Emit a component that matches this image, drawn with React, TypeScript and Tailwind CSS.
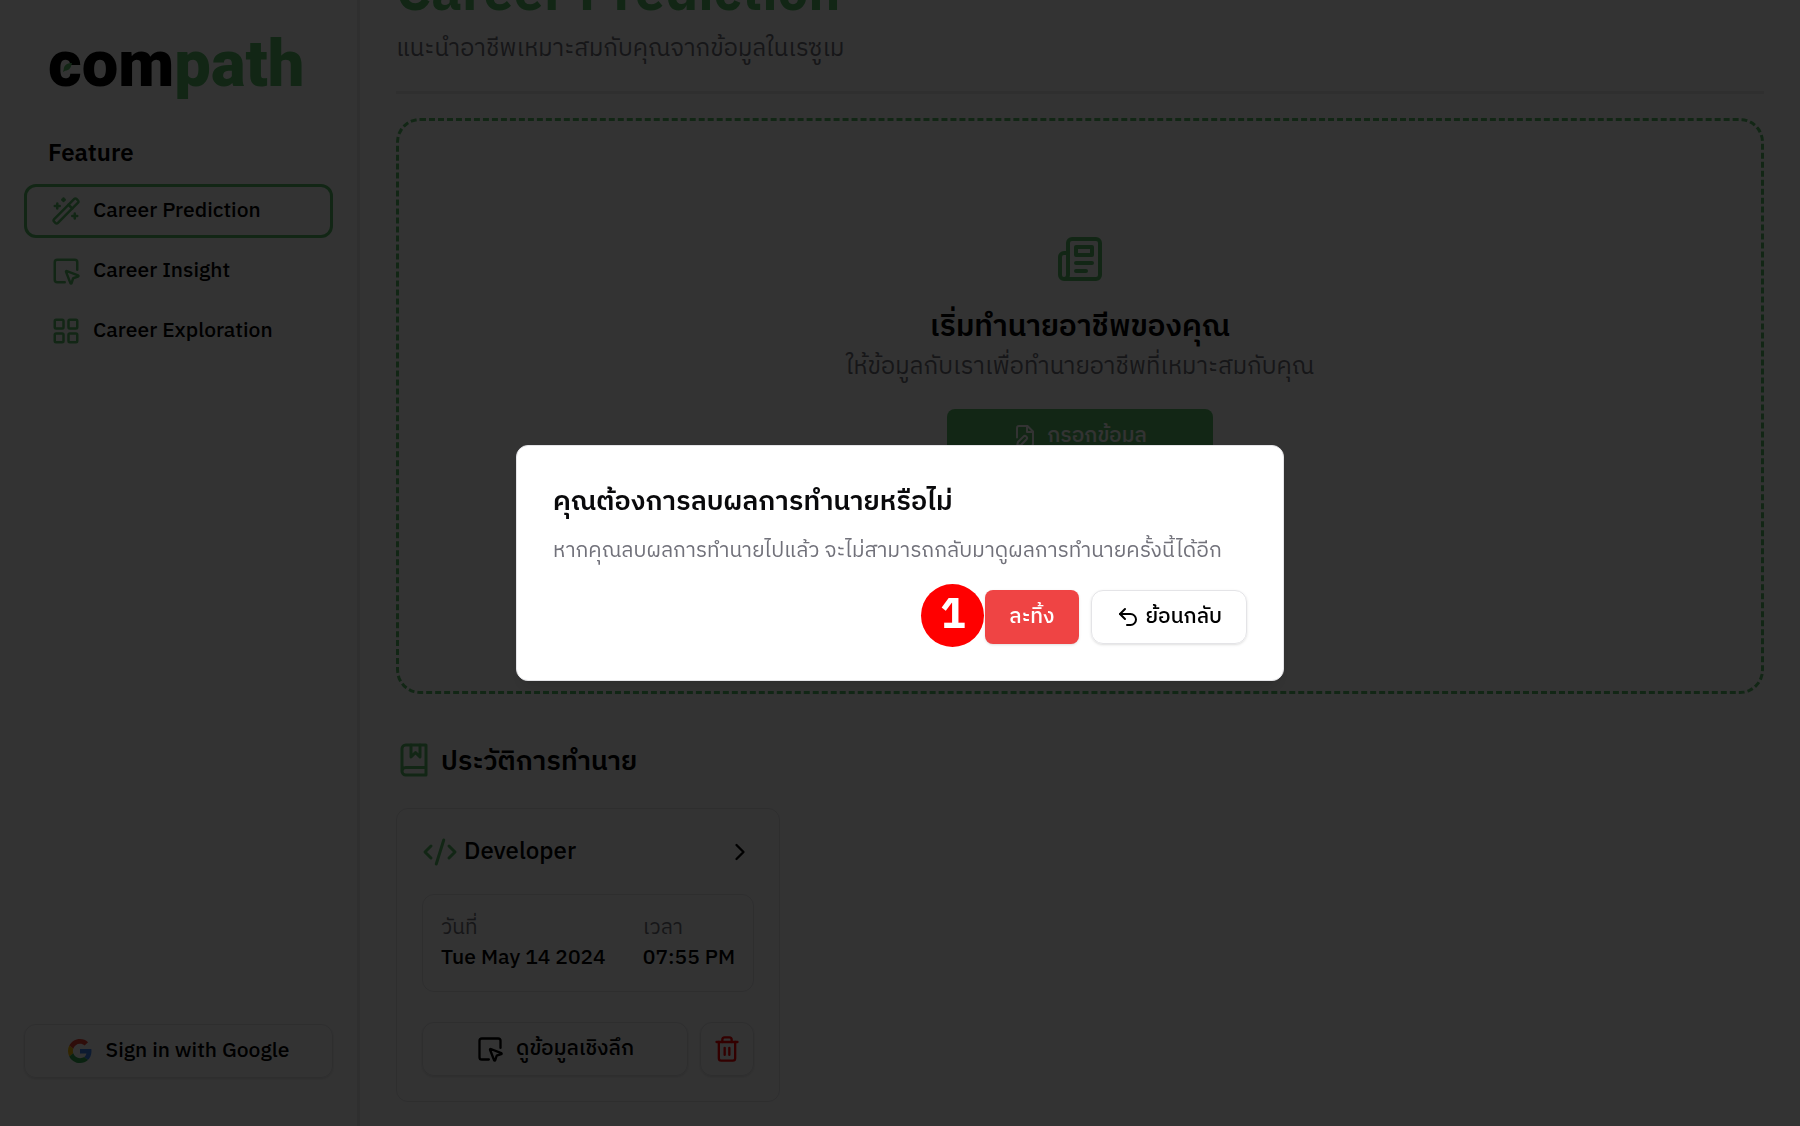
import React from "react";
import { LayoutGrid, SquareMousePointer, Trash2, Undo2, WandSparkles, ChevronRight } from "lucide-react";

function Logo() {
  return (
    <a href="#" aria-label="compath" className="relative ml-6 block w-fit whitespace-nowrap font-['Roboto'] text-[65px] leading-[80px] font-black text-black">
      com<span className="text-[#5abf6a]">path</span>
      <svg viewBox="0 0 10 10" className="absolute top-[39px] left-[15px] size-[9px]" fill="#5abf6a" aria-hidden="true">
        <path d="M10 0C4 0 1 3 .8 7L0 10l2.500-1.500C7 8.500 9 5 10 0Z" />
      </svg>
    </a>
  );
}

function GoogleIcon() {
  return (
    <svg viewBox="0 0 48 48" className="size-6" aria-hidden="true">
      <path fill="#EA4335" d="M24 9.500c3.540 0 6.710 1.220 9.210 3.600l6.850-6.850C35.900 2.380 30.470 0 24 0 14.620 0 6.510 5.380 2.560 13.220l7.980 6.190C12.430 13.720 17.740 9.500 24 9.500z" />
      <path fill="#4285F4" d="M46.980 24.550c0-1.570-.15-3.090-.38-4.550H24v9.020h12.940c-.58 2.960-2.260 5.480-4.780 7.180l7.730 6c4.510-4.180 7.090-10.360 7.090-17.650z" />
      <path fill="#FBBC05" d="M10.530 28.590c-.48-1.450-.76-2.990-.76-4.590s.27-3.140.76-4.590l-7.980-6.190C.92 16.460 0 20.120 0 24c0 3.880.92 7.540 2.560 10.780l7.970-6.190z" />
      <path fill="#34A853" d="M24 48c6.480 0 11.930-2.130 15.890-5.810l-7.730-6c-2.150 1.450-4.920 2.300-8.160 2.300-6.260 0-11.570-4.220-13.470-9.910l-7.980 6.190C6.510 42.620 14.620 48 24 48z" />
    </svg>
  );
}

function Drawing({ className, children }: { className: string; children: React.ReactNode }) {
  return (
    <svg viewBox="0 0 24 24" fill="none" stroke="currentColor" strokeWidth="2" strokeLinecap="round" strokeLinejoin="round" className={className} aria-hidden="true">
      {children}
    </svg>
  );
}

const features = [
  { label: "Career Prediction", icon: WandSparkles, active: true },
  { label: "Career Insight", icon: SquareMousePointer, active: false },
  { label: "Career Exploration", icon: LayoutGrid, active: false },
];

function Sidebar() {
  return (
    <aside className="flex w-[360px] shrink-0 flex-col border-r-3 border-[#ececec] px-6 pt-6 pb-12">
      <Logo />
      <h2 className="mt-8 ml-6 text-2xl leading-9 font-semibold">Feature</h2>
      <nav className="mt-3 flex flex-col gap-1.5">
        {features.map(({ label, icon: Icon, active }) => (
          <a
            key={label}
            href="#"
            className={
              "flex h-[54px] items-center gap-3 rounded-xl border-3 px-6 text-[21px] leading-[30px] font-medium " +
              (active ? "border-[#5abf6a]" : "border-transparent")
            }
          >
            <Icon className="size-[30px] text-[#5abf6a]" />
            {label}
          </a>
        ))}
      </nav>
      <button className="mt-auto flex h-[54px] items-center justify-center gap-3.5 rounded-xl border border-[#e4e4e7] text-[21px] leading-[30px] font-medium shadow-sm">
        <GoogleIcon />
        Sign in with Google
      </button>
    </aside>
  );
}

function HistoryCard() {
  return (
    <article className="w-96 rounded-xl border border-[#e4e4e7] p-[25px]">
      <header className="flex h-9 items-center gap-1.5">
        <Drawing className="size-9 text-[#5abf6a]">
          <path d="m18 16 4-4-4-4" />
          <path d="m6 8-4 4 4 4" />
          <path d="m14.500 4-5 16" />
        </Drawing>
        <h3 className="text-2xl leading-9 font-medium">Developer</h3>
        <button aria-label="Open Developer" className="ml-auto">
          <ChevronRight className="size-7" />
        </button>
      </header>
      <dl className="mt-6 flex h-[98px] justify-between rounded-xl border border-[#e4e4e7] px-[18px] pt-[18px] text-[21px]">
        <div>
          <dt className="leading-[30px] text-[#71717a]">วันที่</dt>
          <dd className="leading-[30px] font-medium">Tue May 14 2024</dd>
        </div>
        <div>
          <dt className="leading-[30px] text-[#71717a]">เวลา</dt>
          <dd className="leading-[30px] font-medium">07:55 PM</dd>
        </div>
      </dl>
      <div className="mt-[30px] flex gap-3">
        <button className="flex h-[54px] flex-1 items-center justify-center gap-3 rounded-xl border border-[#e4e4e7] text-[21px] leading-[30px] font-medium shadow-sm">
          <SquareMousePointer className="size-7" />
          ดูข้อมูลเชิงลึก
        </button>
        <button aria-label="ลบ" className="flex size-[54px] items-center justify-center rounded-xl border border-[#e4e4e7] text-[#ff0000] shadow-sm">
          <Trash2 className="size-7" />
        </button>
      </div>
    </article>
  );
}

function Page() {
  return (
    <main className="min-w-0 flex-1 overflow-hidden px-9">
      <header className="-mt-[38px] border-b-3 border-[#ececec] pb-[21px]">
        <h1 className="text-[54px] leading-[66px] font-bold text-[#5abf6a]">Career Prediction</h1>
        <p className="text-2xl leading-[42px] text-[#71717a]">แนะนำอาชีพเหมาะสมกับคุณจากข้อมูลในเรซูเม</p>
      </header>
      <section className="mt-6 flex h-[576px] flex-col items-center rounded-3xl border-3 border-dashed border-[#5abf6a] pt-[114px]">
        <Drawing className="size-12 text-[#5abf6a]">
          <path d="M4 22h16a2 2 0 0 0 2-2V4a2 2 0 0 0-2-2H8a2 2 0 0 0-2 2v16a2 2 0 0 1-2 2Zm0 0a2 2 0 0 1-2-2v-9c0-1.100.9-2 2-2h2" />
          <path d="M18 14h-8" />
          <path d="M15 18h-5" />
          <path d="M10 6h8v4h-8V6Z" />
        </Drawing>
        <h2 className="mt-6 text-3xl leading-[42px] font-semibold">เริ่มทำนายอาชีพของคุณ</h2>
        <p className="text-2xl leading-9 text-[#71717a]">ให้ข้อมูลกับเราเพื่อทำนายอาชีพที่เหมาะสมกับคุณ</p>
        <button className="mt-6 flex h-[54px] w-[266px] items-center justify-center gap-2.5 rounded-lg bg-[#5abf6a] text-[21px] leading-[30px] font-medium text-white">
          <Drawing className="size-6">
            <path d="M4 13.500V4a2 2 0 0 1 2-2h8.500L20 7.500V20a2 2 0 0 1-2 2h-5.500" />
            <path d="M14 2v6h6" />
            <path d="M10.420 12.610a2.100 2.100 0 1 1 2.970 2.970L7.950 21 4 22l.99-3.950 5.430-5.440Z" />
          </Drawing>
          กรอกข้อมูล
        </button>
      </section>
      <section className="mt-12">
        <div className="flex items-start gap-[9px]">
          <Drawing className="size-9 text-[#5abf6a]">
            <path d="M4 19.500v-15A2.500 2.500 0 0 1 6.500 2H20v20H6.500a2.500 2.500 0 0 1 0-5H20" />
            <path d="M10 2v8l3-3 3 3V2" />
          </Drawing>
          <h2 className="text-[27px] leading-10 font-semibold">ประวัติการทำนาย</h2>
        </div>
        <div className="mt-[26px]">
          <HistoryCard />
        </div>
      </section>
    </main>
  );
}

function DeleteDialog() {
  return (
    <div className="fixed inset-0 flex items-center justify-center bg-black/80">
      <div role="alertdialog" aria-modal="true" aria-labelledby="dialog-title" aria-describedby="dialog-text" className="w-full max-w-3xl rounded-xl border border-[#e4e4e7] bg-white p-9 shadow-lg">
        <h2 id="dialog-title" className="text-[27px] leading-10 font-semibold text-[#09090b]">คุณต้องการลบผลการทำนายหรือไม่</h2>
        <p id="dialog-text" className="mt-3.5 text-[21px] leading-[30px] text-[#71717a]">หากคุณลบผลการทำนายไปแล้ว จะไม่สามารถกลับมาดูผลการทำนายครั้งนี้ได้อีก</p>
        <div className="mt-6 flex justify-end gap-3">
          <div className="relative">
            <span className="absolute -top-1.5 right-full mr-px flex size-[63px] items-center justify-center rounded-full bg-[#ff0000] text-[42px] leading-none font-bold text-white">1</span>
            <button className="flex h-[54px] items-center rounded-lg bg-[#ef4444] px-6 text-[21px] leading-[30px] font-medium text-white shadow-sm">ละทิ้ง</button>
          </div>
          <button className="flex h-[54px] items-center gap-1.5 rounded-xl border border-[#e4e4e7] px-6 text-[21px] leading-[30px] font-medium text-black shadow-sm">
            <Undo2 className="size-6" />
            ย้อนกลับ
          </button>
        </div>
      </div>
    </div>
  );
}

export default function App() {
  return (
    <div className="flex h-screen overflow-hidden bg-white font-['IBM_Plex_Sans_Thai','Noto_Sans','Noto_Sans_Thai',sans-serif] text-black">
      <Sidebar />
      <Page />
      <DeleteDialog />
    </div>
  );
}
